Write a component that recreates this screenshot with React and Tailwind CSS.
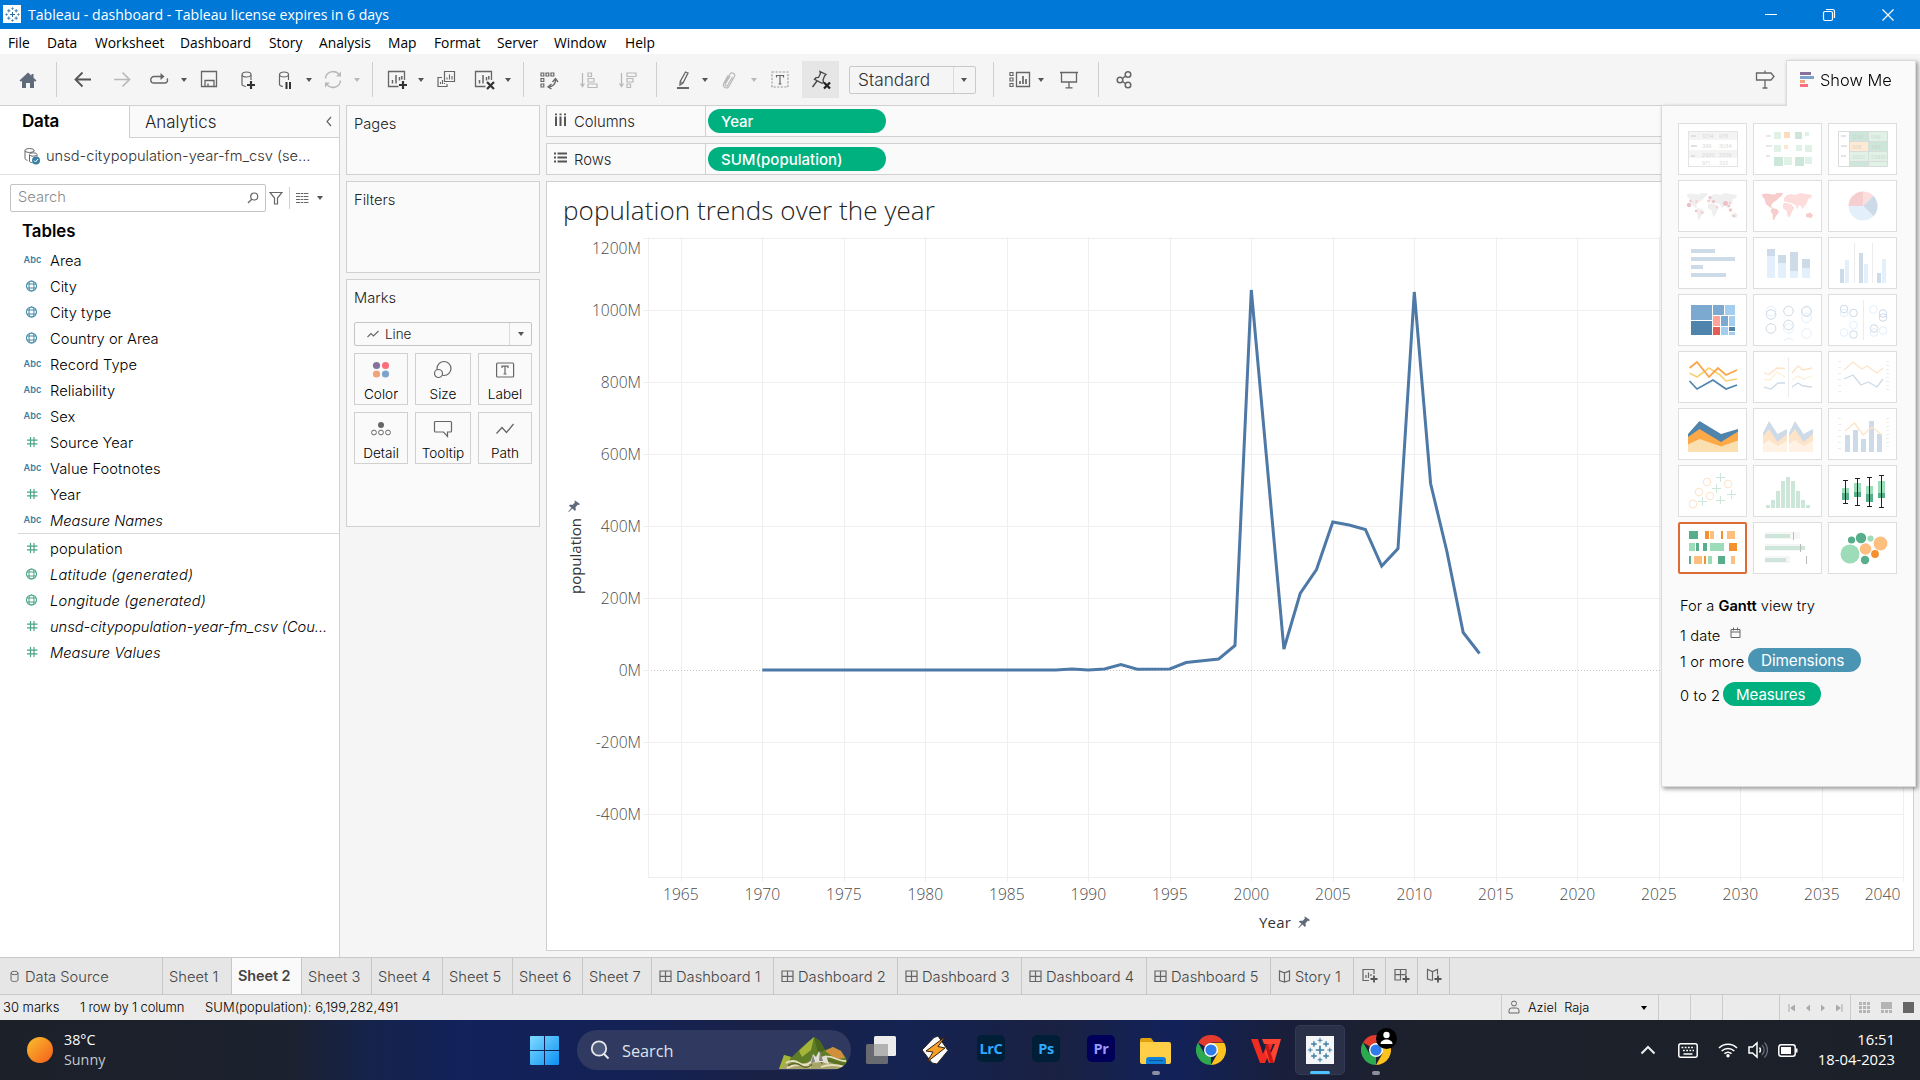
import React from "react";

const UI = "font-['Inter','Liberation_Sans',sans-serif]";
const SYS = "font-['Open_Sans','Noto_Sans',sans-serif]";

/* ---------- shared glyphs ---------- */

function Ic({ w = 20, h = 20, className = "", children }) {
  return (
    <svg width={w} height={h} viewBox={`0 0 ${w} ${h}`} fill="none" className={`shrink-0 ${className}`}>
      {children}
    </svg>
  );
}

const Caret = ({ className = "", c = "#555" }) => (
  <Ic w={8} h={6} className={className}>
    <path d="M1 1h6L4 5z" fill={c} />
  </Ic>
);

const Sep = ({ className }) => <div className={`h-[35px] w-px shrink-0 bg-[#cfcfcf] ${className}`} />;

const TableauMark = ({ size, c = "#2f6f9f" }) => (
  <svg width={size} height={size} viewBox="0 0 30 30" stroke={c} fill="none">
    <path d="M15 10.5v9M10.5 15h9" strokeWidth="1.8" />
    <path d="M8.5 5.5v6M5.5 8.5h6M21.5 5.5v6M18.5 8.5h6M8.5 18.5v6M5.5 21.5h6M21.5 18.5v6M18.5 21.5h6" strokeWidth="1.5" />
    <path d="M15 2v5M12.5 4.5h5M15 23v5M12.5 25.5h5M4.5 12.5v5M2 15h5M25.5 12.5v5M23 15h5" strokeWidth="1.1" />
  </svg>
);

const Pin = ({ c = "#5f6b7b" }) => (
  <path d="M7 0.5l5 3.5-1 1-1.2-.2-2.3 2.5.3 2.7-1 .9-2.3-2.4L.8 12l-.5-.4L3.5 7.8.9 5.7l.9-1 3 .1L7 2.2 6.3 1z" fill={c} />
);

/* ---------- title + menu ---------- */

function TitleBar() {
  return (
    <div className={`flex h-[29px] items-center bg-[#0078d7] text-white ${SYS}`}>
      <div className="-mt-px ml-[3px] flex h-[18px] w-[18px] items-center justify-center bg-white">
        <TableauMark size={17} c="#2a6aa0" />
      </div>
      <span className="ml-[7px] text-[14.1px]">Tableau - dashboard - Tableau license expires in 6 days</span>
      <div className="ml-auto flex items-center">
        <Ic w={14} h={14}><path d="M1 6.5h12" stroke="#fff" /></Ic>
        <Ic w={14} h={14} className="ml-[44px]">
          <rect x="1.5" y="3.5" width="9" height="9" rx="1.5" stroke="#fff" strokeWidth="1.2" />
          <path d="M4 1.5h6.5a2 2 0 0 1 2 2V10" stroke="#fff" strokeWidth="1.2" />
        </Ic>
        <Ic w={14} h={14} className="ml-[45px] mr-[25px]"><path d="M1.5 1.5l11 11M12.5 1.5l-11 11" stroke="#fff" strokeWidth="1.2" /></Ic>
      </div>
    </div>
  );
}

const MENU = [
  ["File", "w-[39px]"], ["Data", "w-[48px]"], ["Worksheet", "w-[85px]"], ["Dashboard", "w-[89px]"],
  ["Story", "w-[50px]"], ["Analysis", "w-[69px]"], ["Map", "w-[46px]"], ["Format", "w-[63px]"],
  ["Server", "w-[57px]"], ["Window", "w-[71px]"], ["Help", "w-[40px]"],
];

function MenuBar() {
  return (
    <div className={`flex h-[25px] items-center bg-white pl-[8px] text-[13.8px] text-black ${SYS}`}>
      {MENU.map(([m, w]) => <span key={m} className={`shrink-0 pt-[3px] ${w}`}>{m}</span>)}
    </div>
  );
}

/* ---------- toolbar ---------- */

const G = "#666";
const L = "#b9b9b9";

function Toolbar() {
  return (
    <div className="flex h-[51px] items-center bg-[#f5f5f5]">
      <Ic className="ml-[18px]"><path d="M10 2.5L1.5 10.5l1.4 1.2L4 10.8V18h4v-5h4v5h4v-7.2l1.1.9 1.4-1.2-3-2.8V4h-2v1.8z" fill="#5f6b7b" /></Ic>
      <Sep className="ml-[18px]" />
      <Ic className="ml-4"><path d="M18 9.5H3M9.5 2.5L2.5 9.5l7 7" stroke="#555" strokeWidth="1.8" /></Ic>
      <Ic className="ml-[19px]"><path d="M2 9.5h15M10.5 2.5l7 7-7 7" stroke={L} strokeWidth="1.7" /></Ic>
      <Ic className="ml-[17px]">
        <path d="M13 6.5H5a3.2 3.2 0 0 0 0 6.5h11a2.8 2.8 0 0 0 2-4.5" stroke={G} strokeWidth="1.4" />
        <path d="M11.5 3L15.5 6.5l-4 3.5z" fill={G} />
      </Ic>
      <Caret className="ml-[11px]" />
      <Ic className="ml-[11px]">
        <path d="M2.5 1.5h15v15h-15z" stroke={G} strokeWidth="1.3" /><path d="M6 16.5v-6h9v6M9 16.5v-3" stroke={G} strokeWidth="1.3" />
      </Ic>
      <Ic className="ml-[19px]">
        <path d="M4 5v9.5c0 1 1.5 1.5 4 2M13 5v5" stroke={G} strokeWidth="1.2" /><ellipse cx="8.5" cy="4.5" rx="4.5" ry="2.5" stroke={G} strokeWidth="1.2" />
        <path d="M13 11v8M9 15h8" stroke="#333" strokeWidth="2.2" />
      </Ic>
      <Ic className="ml-[17px]">
        <path d="M4.5 5v9.5c0 1 1 1.5 3.5 2M13.5 5v5" stroke={G} strokeWidth="1.2" /><ellipse cx="9" cy="4.5" rx="4.5" ry="2.5" stroke={G} strokeWidth="1.2" />
        <path d="M11.5 12v7M15 12v7" stroke="#333" strokeWidth="2" />
      </Ic>
      <Caret className="ml-[10px]" />
      <Ic className="ml-[10px]">
        <path d="M2.5 8.5a7.5 7.5 0 0 1 14-3M17.5 10.5a7.5 7.5 0 0 1-14 3" stroke={L} strokeWidth="1.5" />
        <path d="M18 1.5v5h-5zM2 17.5v-5h5z" fill={L} />
      </Ic>
      <Caret className="ml-[10px]" c={L} />
      <Sep className="ml-[11px]" />
      <Ic w={22} className="ml-[14px]">
        <path d="M17.5 10V1.5h-16v15h10" stroke={G} strokeWidth="1.3" /><path d="M5.5 13.5V10M9 13.5V5M12.5 10.5V7M14.8 9.5V6" stroke={G} strokeWidth="1.5" />
        <path d="M16 11v8M12 15h8" stroke="#333" strokeWidth="2.2" />
      </Ic>
      <Caret className="ml-2" />
      <Ic className="ml-[11px]">
        <path d="M8.5 1.5h10v10h-10z" stroke={G} strokeWidth="1.2" /><path d="M6 7.5H2v9h9V14" stroke={G} strokeWidth="1.2" />
        <path d="M11 9.5v-2M13.5 9.5v-5M16 9.5V6M4.5 14v-2M6.5 14v-4M8.5 14v-1" stroke={G} strokeWidth="1.1" />
      </Ic>
      <Ic w={22} className="ml-[18px]">
        <path d="M17.5 10V1.5h-16v15h10" stroke={G} strokeWidth="1.3" /><path d="M5.5 13.5V10M9 13.5V5M12.5 10.5V7M14.8 9.5V6" stroke={G} strokeWidth="1.5" />
        <path d="M13 12l7 7M20 12l-7 7" stroke="#333" strokeWidth="2.2" />
      </Ic>
      <Caret className="ml-2" />
      <Sep className="ml-[11px]" />
      <Ic className="ml-[15px]">
        <path d="M2 3h2.8v3H2zM7 3h2.8v3H7zM12 3h2.8v3H12zM2 8.5h2.8v3H2zM2 14h2.8v3H2z" stroke={G} strokeWidth="1.2" />
        <path d="M16.5 10c0 4-2 6-6 7M13.5 12l3-3.5 2.5 3.5M12.5 14l-3.5 3 3.5 2" stroke={G} strokeWidth="1.3" />
      </Ic>
      <Ic className="ml-5">
        <path d="M3.5 3v13M1.5 13.5l2 3 2-3" stroke={L} strokeWidth="1.3" /><path d="M9 3h3.5v3.5H9zM9 8.5h6V12H9zM9 14h9v3.5H9z" stroke={L} strokeWidth="1.2" />
      </Ic>
      <Ic className="ml-[19px]">
        <path d="M3.5 3v13M1.5 13.5l2 3 2-3" stroke={L} strokeWidth="1.3" /><path d="M9 3h9v3.5H9zM9 8.5h6V12H9zM9 14h3.5v3.5H9z" stroke={L} strokeWidth="1.2" />
      </Ic>
      <Sep className="ml-[18px]" />
      <Ic className="ml-4">
        <path d="M12.5 2l2.5 1-5 10-3 2 .2-3.5z" stroke={G} strokeWidth="1.3" /><path d="M7 11.5l3 1.5" stroke={G} /><path d="M4 18h12" stroke={G} strokeWidth="2" />
      </Ic>
      <Caret className="ml-2" />
      <Ic className="ml-[10px]">
        <path d="M6 13l5-9a2.6 2.6 0 0 1 4.5 2.5l-6 10.5a3 3 0 0 1-5-3L9 5.5M13.5 7l-5 8.5a1.4 1.4 0 0 1-2.4-1.2L11 6" stroke={L} strokeWidth="1.2" />
      </Ic>
      <Caret className="ml-[11px]" c={L} />
      <Ic className="ml-3">
        <rect x="2" y="2" width="16" height="15" stroke="#999" strokeWidth="1.1" strokeDasharray="2.2 1.4" />
        <path d="M6.5 7.5V5.5h7v2M10 5.5v8.5M8.5 14h3" stroke={G} strokeWidth="1.2" />
      </Ic>
      <div className="ml-3 flex h-[37px] w-[37px] items-center justify-center bg-[#e6e6e6]">
        <Ic w={22} h={22}>
          <path d="M10 2.5l6 3-1.5 1.5-1.5 4 .5 2.5-1.5.8-7.5-4 1.5-1.6L8.5 8.5 10.5 4.5zM7 12l-4.5 6" stroke="#444" strokeWidth="1.3" />
          <path d="M14 13.5l6 6M20 13.5l-6 6" stroke="#222" strokeWidth="2.3" />
        </Ic>
      </div>
      <div className={`ml-[10px] flex h-7 w-[127px] items-center rounded-[2px] border border-[#c9c9c9] bg-[#f5f5f5] ${UI}`}>
        <span className="grow pl-[8px] pt-px text-[17.3px] font-light leading-none text-[#333]">Standard</span>
        <div className="h-full w-px bg-[#dcdcdc]" />
        <Caret className="ml-[6px] mr-[7px]" />
      </div>
      <Sep className="ml-[17px]" />
      <Ic w={22} className="ml-[15px]">
        <path d="M1 2.5h3v3H1zM1 8h3v3H1zM1 13.5h3v3H1z" stroke={G} strokeWidth="1.2" /><path d="M7.5 2.5h13v14h-13z" stroke={G} strokeWidth="1.3" />
        <path d="M11 14v-3M14 14v-8M17 14v-5" stroke={G} strokeWidth="1.7" />
      </Ic>
      <Caret className="ml-[6px]" />
      <Ic className="ml-[14px]">
        <path d="M1 2.5h18M2.5 2.5v9.5h15V2.5M10 12V17.5M6.5 17.8h7" stroke={G} strokeWidth="1.3" />
      </Ic>
      <Sep className="ml-[19px]" />
      <Ic className="ml-[15px]">
        <circle cx="6" cy="10" r="2.8" stroke={G} strokeWidth="1.5" /><circle cx="14" cy="4.5" r="2.8" stroke={G} strokeWidth="1.5" /><circle cx="14" cy="15" r="2.8" stroke={G} strokeWidth="1.5" />
        <path d="M8.5 8.5l3-2.5M8.5 11.5l3 2" stroke={G} strokeWidth="1.5" />
      </Ic>
      <Ic className="ml-auto mr-[145px]">
        <path d="M1.500 3H16l3 3.5-3 3.5H1.500zM10 .5v2.500M10 10v8M7.500 18h5" stroke={G} strokeWidth="1.3" />
      </Ic>
    </div>
  );
}

/* ---------- data pane ---------- */

const BLUE = "#4489a8";
const GREEN = "#4aa583";

function FieldIcon({ type, c }) {
  if (type === "abc")
    return <span className="w-[17px] text-[9.2px] font-semibold leading-none text-[#3f7f9f]">Abc</span>;
  if (type === "geo")
    return (
      <Ic w={17} h={12} className="-mt-px">
        <circle cx="7.5" cy="6" r="5" stroke={c} strokeWidth="1.1" /><ellipse cx="7.5" cy="6" rx="2.5" ry="5" stroke={c} /><path d="M3 4h9M3 8h9" stroke={c} />
      </Ic>
    );
  return <Ic w={17} h={12} className="-mt-px"><path d="M6.5 1v10M10 1v10M3 4.2h10.5M3 7.8h10.5" stroke={c} strokeWidth="1.2" /></Ic>;
}

const DIMS = [
  ["abc", "Area"], ["geo", "City"], ["geo", "City type"], ["geo", "Country or Area"], ["abc", "Record Type", "tracking-[0.05px]"],
  ["abc", "Reliability", "tracking-[0.05px]"], ["abc", "Sex"], ["num", "Source Year"], ["abc", "Value Footnotes", "tracking-[0.08px]"], ["num", "Year"],
  ["abc", "Measure Names", "italic"],
];
const MEAS = [
  ["num", "population", "tracking-[0.1px]"], ["geo", "Latitude (generated)", "italic tracking-[0.22px]"],
  ["geo", "Longitude (generated)", "italic tracking-[0.2px]"],
  ["num", "unsd-citypopulation-year-fm_csv (Cou...", "italic tracking-[-0.04px]"], ["num", "Measure Values", "italic tracking-[0.03px]"],
];

function Field({ type, name, look = "", c }) {
  return (
    <div className="-mt-px mb-px flex h-[26px] items-center pl-[23.5px]">
      <FieldIcon type={type} c={type === "num" ? GREEN : c} />
      <span className={`ml-[9.5px] whitespace-nowrap pt-[1.5px] text-[14.7px] font-light text-black ${look}`}>{name}</span>
    </div>
  );
}

function DataPane() {
  return (
    <div className={`flex w-[340px] shrink-0 flex-col border-r border-t border-[#d0d0d0] bg-white ${UI}`}>
      <div className="flex h-8 text-[17px]">
        <div className="w-[129px] pl-[22px] pt-[3px] font-semibold tracking-[-0.2px] text-black">Data</div>
        <div className="flex grow items-center border-b border-l border-[#d0d0d0] bg-[#fafafa] pl-[15px]">
          <span className="pt-[2px] text-[16.9px] font-light text-[#222]">Analytics</span>
          <Ic w={8} h={14} className="ml-auto mr-[6px]"><path d="M6 2L2 6.5l4 4.5" stroke={G} strokeWidth="1.2" /></Ic>
        </div>
      </div>
      <div className="flex h-[37px] items-center border-b border-[#e0e0e0] pl-[23px]">
        <Ic w={18} h={18}>
          <path d="M2 3.5v8c0 1 1 1.5 2.5 1.8M11 3.5v1M6.5 8v6c0 1 1.2 1.5 3 1.8M14 8v1.5" stroke={G} />
          <ellipse cx="6.5" cy="3.5" rx="4.5" ry="2" stroke={G} /><ellipse cx="10.2" cy="7.5" rx="3.8" ry="1.7" stroke={G} />
          <circle cx="13" cy="13.5" r="4" fill="#3a7fa5" /><path d="M11 13.5l1.5 1.5 2.5-3" stroke="#fff" />
        </Ic>
        <span className="ml-[5px] pt-px text-[14.65px] font-light text-[#333]">unsd-citypopulation-year-fm_csv (se...</span>
      </div>
      <div className="flex h-12 items-center pb-[3px] pl-[10px]">
        <div className="flex h-[28px] w-[256px] items-center rounded-[2px] border border-[#c4c4c4] pl-[7px] pr-[6px]">
          <span className="grow text-[14.7px] font-light text-[#8a8a8a]">Search</span>
          <Ic w={12} h={12}><circle cx="7.2" cy="4.5" r="3.5" stroke={G} strokeWidth="1.2" /><path d="M4.7 7.2L1 11" stroke={G} strokeWidth="1.3" /></Ic>
        </div>
        <Ic w={14} h={14} className="ml-[3px]"><path d="M1 1.5h12L8.5 7v6h-3V7z" stroke={G} strokeWidth="1.2" /></Ic>
        <div className="ml-[6px] h-[22px] w-px bg-[#d0d0d0]" />
        <Ic w={13} h={12} className="ml-[6px]">
          <path d="M0 1.5h13M0 4.5h13M0 7.5h13M0 10.5h13" stroke={G} strokeWidth="1.2" strokeDasharray="4 .6 2.8 .6" />
        </Ic>
        <Caret className="ml-[7px]" />
      </div>
      <div className="h-[25px] pl-[22px] text-[16.8px] font-semibold leading-[16px] text-black">Tables</div>
      {DIMS.map(([t, n, i]) => <Field key={n} type={t} name={n} look={i} c={BLUE} />)}
      <div className="-mt-px mb-px ml-[18px] h-[2px] border-t border-[#d8d8d8]" />
      {MEAS.map(([t, n, i]) => <Field key={n} type={t} name={n} look={i} c={GREEN} />)}
    </div>
  );
}

/* ---------- cards ---------- */

function MarkButton({ label, children, w }) {
  return (
    <div className={`flex h-[52px] flex-col items-center justify-end border border-[#d0d0d0] bg-[#fafafa] pb-[2px] ${w}`}>
      <Ic w={22} h={20}>{children}</Ic>
      <span className="mt-[6px] text-[13.6px] font-light leading-[16px] text-black">{label}</span>
    </div>
  );
}

function Cards() {
  const box = "border border-[#d0d0d0] bg-[#fafafa] pl-[7px] text-[14.7px] font-light text-[#222]";
  return (
    <div className={`ml-[6px] flex w-[194px] shrink-0 flex-col gap-[6px] ${UI}`}>
      <div className={`h-[70px] pt-[7px] ${box}`}>Pages</div>
      <div className={`h-[92px] pt-[7px] ${box}`}>Filters</div>
      <div className={`h-[248px] pt-[7px] ${box}`}>
        Marks
        <div className="mt-[13px] flex h-6 w-[178px] items-center rounded-[2px] border border-[#c4c4c4] text-[13.4px]">
          <Ic w={12} h={8} className="ml-3"><path d="M.5 7L4 3.5 6.5 6 11.5 1" stroke={G} strokeWidth="1.1" /></Ic>
          <span className="ml-[6px] grow">Line</span>
          <div className="h-full w-px bg-[#dcdcdc]" />
          <Caret className="ml-[7px] mr-[6px]" />
        </div>
        <div className="mt-[7px] flex w-[178px] flex-wrap justify-between gap-y-[7px]">
          <MarkButton label="Color" w="w-[54px]">
            <circle cx="6.5" cy="5.5" r="3.6" fill="#87709b" /><circle cx="15.5" cy="5.5" r="3.6" fill="#fb6e7d" />
            <circle cx="6.5" cy="14" r="3.6" fill="#efa47c" /><circle cx="15.5" cy="14" r="3.6" fill="#7da3cc" />
          </MarkButton>
          <MarkButton label="Size" w="w-[56px]">
            <circle cx="12" cy="8.5" r="7" stroke={G} strokeWidth="1.2" /><circle cx="6.5" cy="13.5" r="4" stroke={G} strokeWidth="1.2" fill="#fafafa" />
          </MarkButton>
          <MarkButton label="Label" w="w-[54px]">
            <rect x="2.6" y="3" width="17" height="14" rx="1" stroke={G} strokeWidth="1.2" /><path d="M8 8V6.2h6V8M11 6.2V14M9.5 14h3" stroke={G} strokeWidth="1.2" />
          </MarkButton>
          <MarkButton label="Detail" w="w-[54px]">
            <circle cx="11" cy="6" r="3" fill={G} /><circle cx="4" cy="13.5" r="2.4" stroke={G} /><circle cx="11" cy="13.5" r="2.4" stroke={G} /><circle cx="18" cy="13.5" r="2.4" stroke={G} />
          </MarkButton>
          <MarkButton label="Tooltip" w="w-[56px]">
            <path d="M3.5 2.5h15a1 1 0 0 1 1 1v8.5a1 1 0 0 1-1 1H15.5v4.5L11.5 13h-8a1 1 0 0 1-1-1V3.5a1 1 0 0 1 1-1z" stroke={G} strokeWidth="1.2" />
          </MarkButton>
          <MarkButton label="Path" w="w-[54px]">
            <path d="M2.5 14.5L8 8.5l4.5 5L19.5 5" stroke={G} strokeWidth="1.3" />
          </MarkButton>
        </div>
      </div>
    </div>
  );
}

/* ---------- shelves + chart ---------- */

function Shelf({ label, pill, children }) {
  return (
    <div className={`flex h-8 shrink-0 items-center border border-r-0 border-[#d0d0d0] bg-[#fafafa] ${UI}`}>
      <div className="flex h-full w-[159px] items-center border-r border-[#d0d0d0] pl-[7px]">
        <Ic w={13} h={13} className="-mt-[3px]">{children}</Ic>
        <span className="ml-[7px] pt-[2px] text-[14.8px] font-light text-[#222]">{label}</span>
      </div>
      <div className="ml-[2px] flex h-6 w-[178px] items-center rounded-full bg-[#00b180] pl-[13px] pt-[2px] text-[15px] font-medium text-white">{pill}</div>
    </div>
  );
}

const POINTS = [
  [1970, 670], [1986, 670], [1988, 670], [1989, 669], [1990, 670], [1991, 669], [1992, 664.5], [1993, 669.2], [1995, 669],
  [1996, 662.5], [1998, 659], [1999, 645.5], [2000, 290], [2002, 649], [2003, 593.5], [2004, 569.5], [2005, 522],
  [2006, 525], [2007, 529.5], [2008, 566], [2009, 548.5], [2010, 292], [2011, 483.5], [2012, 551.5], [2013, 632.5], [2014, 653.5],
];
const px = (year) => 680.8 + (year - 1965) * 16.3;
const YEARS = Array.from({ length: 16 }, (_, i) => 1965 + i * 5);
const VALUES = ["1200M", "1000M", "800M", "600M", "400M", "200M", "0M", "-200M", "-400M"];

function Chart() {
  return (
    <div className="flex grow flex-col border border-[#d0d0d0] bg-white">
      <div className={`h-[55px] pl-4 pt-[11px] text-[26px] font-light leading-[34px] tracking-[0.08px] text-[#222] ${SYS}`}>population trends over the year</div>
      <svg width="1366" height="713" viewBox="547 237 1366 713" fill="none" className={SYS}>
        <g shapeRendering="crispEdges" stroke="#efefef">
          <path d="M648.5 237v640M648 877.5h1256" />
          {YEARS.map((y) => <path key={y} d={`M${Math.floor(px(y) + 0.6) + 0.5} 237v645`} />)}
          {VALUES.map((v, i) => i !== 6 && <path key={v} d={`M643 ${238.5 + i * 72}h1261`} />)}
          <path d="M643 670.5h5" />
          <path d="M651 670.5h1253" stroke="#c4c4c4" strokeDasharray="1 2" />
        </g>
        <g fill="#4a4a4a" fontSize="15.6" fontWeight="300">
          {VALUES.map((v, i) => <text key={v} x="641" y={i === 0 ? 254 : 244 + i * 72} textAnchor="end">{v}</text>)}
          {YEARS.map((y) => <text key={y} x={y === 2040 ? 1882.5 : px(y)} y="900" textAnchor="middle">{y}</text>)}
        </g>
        <polyline points={POINTS.map(([y, v]) => `${px(y)},${v}`).join(" ")} stroke="#4e79a7" strokeWidth="3" strokeLinejoin="miter" strokeMiterlimit="2" />
        <g fill="#333" fontSize="15" fontWeight="500">
          <text x="1259" y="927.5" textLength="32">Year</text>
          <text transform="translate(580.5 594) rotate(-90)" textLength="76">population</text>
        </g>
        <g transform="translate(568 500)"><Pin /></g>
        <g transform="translate(1298 916)"><Pin /></g>
      </svg>
    </div>
  );
}

/* ---------- Show Me ---------- */

const B1 = "#cddae8", B2 = "#e3f0fb", O1 = "#fde3c8", O2 = "#fef0d8", E1 = "#cce6da", E2 = "#e0f2e6";
const MAP = "M9 14l5-.5 6 1 4-.5 3 3-3 3-3 2-2 2-1 2 2 2-3-.5-4-3.5-1.5-5-2-2zM22 13h8l-2 4-2.5-1zM19 28l5 1 2 3-3 4-2 4h-1l-.5-6-2-3zM30 24l3-1 5 1.5 3 3.5-2 3-2 5-2 1-1-6-4-3zM53 34l4-1.5 3 2.5-1.5 3-5.5-1z";
const ASIA = "M31 18l3-3 4-1 4 1 5-2 6 1 6 1-1 3-3 1-1 4-3 4-1.5 2-1.5-3-2-1-1.5 4-2-4-4.5-2-4-1-3-.5z";
const R = ({ x, y, w, h, c }) => <rect x={x} y={y} width={w} height={h} fill={c} />;
const Rs = ({ d }) => d.map(([x, y, w, h, c], i) => <R key={i} x={x} y={y} w={w} h={h} c={c} />);
const Cs = ({ d, fill }) => d.map(([x, y, r, c], i) => <circle key={i} cx={x} cy={y} r={r} fill={fill ? c : "none"} stroke={fill ? "none" : c} strokeWidth="1" />);
const Ln = ({ p, c, w = 1.3 }) => <polyline points={p} stroke={c} strokeWidth={w} fill="none" />;
const Tx = ({ d }) => (
  <g fontSize="5.2" fontWeight="300" fill="#cccccc">{d.map(([x, y, t]) => <text key={t} x={x} y={y}>{t}</text>)}</g>
);
const Ticks = () => (
  <path d="M10 10.5h3M10 16.5h3M10 22.5h3M10 28.5h3M10 34.5h3M10 40.5h3M58 10.5h3M58 14.5h3M58 18.5h3M58 22.5h3M58 26.5h3M58 30.5h3M58 34.5h3M58 38.5h3" stroke="#ececec" />
);

const THUMBS = [
  <><Rs d={[[10, 8, 49, 9, "#f4f4f4"], [10, 27, 49, 8, "#f4f4f4"], [13, 12, 5, 2, "#e0e0e0"], [13, 22, 6, 2, "#e0e0e0"], [13, 32, 4, 2, "#e0e0e0"]]} /><rect x="10.5" y="8.5" width="49" height="35" stroke="#e4e4e4" /><Tx d={[[24, 15, "1234"], [41, 15, "678"], [24, 24.5, "368"], [41, 24.5, "3034"], [24, 33.5, "2620"], [41, 33.5, "2559"], [24, 41.5, "971"], [41, 41.5, "322"]]} /></>,
  <Rs d={[[13, 12, 5, 2, "#e8e8e8"], [13, 22, 6, 2, "#e8e8e8"], [13, 32, 4, 2, "#e8e8e8"], [21, 9, 7, 7, E2], [31, 9, 6, 6, "#fbdcc0"], [42, 9, 7, 7, E1], [52, 9, 4, 4, E2], [21, 22, 7, 7, E2], [31, 22, 4, 4, "#fee6cf"], [43, 22, 6, 6, E2], [52, 22, 7, 7, E2], [21, 34, 9, 9, E1], [31, 34, 8, 8, E2], [42, 34, 9, 9, E1], [52, 34, 7, 7, E2]]} />,
  <><Rs d={[[21, 8, 19, 10, E1], [40, 8, 20, 10, E2], [21, 18, 19, 10, "#fee9d2"], [40, 18, 20, 10, E1], [21, 28, 19, 10, E2], [40, 28, 20, 10, E2], [21, 38, 19, 5, E1], [40, 38, 20, 5, E2], [13, 12, 5, 2, "#e4e4e4"], [13, 22, 6, 2, "#e4e4e4"], [13, 32, 5, 2, "#e4e4e4"]]} /><path d="M10.5 8.5h49v35h-49zM21.5 8v35M40.5 8v35M21 18.5h38M21 28.5h38M21 38.5h38" stroke="#d8dcda" /><Tx d={[[24, 15.5, "1234"], [43, 15.5, "546"], [24, 25.5, "368"], [43, 25.5, "343"], [24, 35.5, "2620"], [43, 35.5, "53890"]]} /></>,
  <><path d={MAP + ASIA} fill="#efefef" /><Cs fill d={[[11, 25, 2.2, "#ecc0c6"], [12.5, 21, 1.2, "#ecc0c6"], [18.5, 21.5, 1.5, "#fbd5d5"], [32, 17.5, 1.5, "#ecc0c6"], [30.5, 21, 1.5, "#f8cfcf"], [35.5, 21.5, 1.6, "#ecc0c6"], [47.5, 23.5, 2.5, "#ecc0c6"], [52, 23, 1.3, "#f8cfcf"], [51, 26, 1.2, "#ecc0c6"], [52.5, 30, 1.8, "#f5c5c5"], [39, 27, 1.2, "#f8cfcf"], [18, 31, 1.2, "#ecc0c6"], [24, 32.5, 1.8, "#fbd5d5"], [56, 36, 1.2, "#ecc0c6"]]} /></>,
  <><path d={MAP} fill="#f7cdcb" /><path d={ASIA + "M30 24l3-1 5 1.5 3 3.5-2 3-2 5-2 1-1-6-4-3z"} fill="#fddcdc" /></>,
  <><path d="M35 26V11.5A14.5 14.5 0 0 1 45.3 15.7z" fill="#fddede" /><path d="M35 26L45.3 15.7A14.5 14.5 0 0 1 45.3 36.3z" fill={B1} /><path d="M35 26L45.3 36.3A14.5 14.5 0 0 1 20.5 26z" fill={B2} /><path d="M35 26H20.5A14.5 14.5 0 0 1 35 11.5z" fill="#f5cfcf" /></>,
  <Rs d={[[13, 12, 24, 4, B1], [13, 20, 44, 4, B1], [13, 28, 12, 4, B1], [13, 36, 35, 4, B1]]} />,
  <Rs d={[[14, 12, 8, 7, B1], [14, 19, 8, 22, B2], [25, 18, 8, 8, B1], [25, 26, 8, 15, B2], [37, 15, 8, 19, B1], [37, 34, 8, 7, B2], [49, 22, 8, 9, B1], [49, 31, 8, 10, B2]]} />,
  <Rs d={[[26, 6, 1, 40, "#ececec"], [44, 6, 1, 40, "#ececec"], [12, 32, 4, 14, B1], [17, 23, 4, 23, B2], [31, 16, 4, 30, B1], [36, 27, 4, 19, B2], [49, 36, 4, 10, B1], [54, 22, 4, 24, B2]]} />,
  <Rs d={[[13, 11, 21, 15, "#7ba9cf"], [13, 27, 21, 14, "#4f84ad"], [35, 11, 11, 10, "#7ba9cf"], [47, 11, 10, 10, "#a3cef0"], [35, 22, 7, 10, "#ffa39b"], [43, 22, 7, 10, "#7ba9cf"], [51, 22, 6, 10, "#a3cef0"], [35, 33, 7, 8, "#e15f55"], [43, 33, 7, 8, "#a3cef0"], [51, 33, 6, 4, "#4f84ad"], [51, 38, 6, 3, "#a3cef0"]]} />,
  <><Cs d={[[18, 17, 4.8, B2], [18, 20.5, 4.8, B1], [18, 34.5, 4.8, B1], [35.5, 17, 4.8, B1], [35.5, 31, 4.8, B1], [35.5, 34.5, 4.8, B2], [53.5, 17, 4.8, B2], [53.5, 17.5, 4.8, B1], [53.5, 24, 4.8, B2], [53.5, 39.5, 4.8, B2]]} /><path d="M31 47a5 5 0 0 1 9 0" stroke={B2} /></>,
  <><R x={35} y={6} w={1} h={40} c="#ececec" /><Cs d={[[16, 15, 3.8, B1], [16, 19, 3.8, B2], [25.5, 19, 3.8, B1], [25.5, 31, 3.8, B2], [16, 38.5, 3.8, B2], [25.5, 40.5, 3.8, B1], [45.5, 15.5, 3.8, B2], [55, 19.5, 3.8, B1], [55, 23.5, 3.8, B1], [46, 34.5, 3.8, B1], [46, 38.5, 3.8, B2], [55, 36.5, 3.8, B2]]} /></>,
  <><Ln p="11.5,22 19,26 31,17 42,24 48,30 59,28" c="#f8d271" w={1.6} /><Ln p="11.5,17 19,11 31,26 40,17 48,24 59,19" c="#f9a64a" w={1.8} /><Ln p="11.5,30 19,38 35,29 48,38 59,34" c="#4f84ad" w={1.7} /></>,
  <><R x={35} y={6} w={1} h={40} c="#ececec" /><Ln p="11,22 16,23.5 24,17 32,17.5" c={O1} /><Ln p="11,28.5 17,29 24,21 32,26" c={O2} /><Ln p="11,36 18,38 25,32 32,32" c={B1} /><Ln p="39,22 45,15 50,19 59,17" c={O1} /><Ln p="39,29 45,25 50,28 59,25" c={O2} /><Ln p="39,36 45,32 50,35 59,36" c={B1} /></>,
  <><Ticks /><Ln p="16,19 25,11 34,18 39,15 49,22 55,17" c={O1} /><Ln p="16,28 25,24 33,34 40,31 49,36 55,28" c={B1} /></>,
  <><path d="M10 26l11.5-13L43 26l17-5v22.5H10z" fill="#4f84ad" /><path d="M10 29l11.5-8L43 34l17-10.5v20H10z" fill="#fda948" /><path d="M10 36.5L21.5 31 43 38.5l17-6v11.5H10z" fill="#fae0b0" /></>,
  <><path d="M10 25l6-12 8.5 13 9.5-5v22.5H10zM36 25l6-12 8.5 13 9.5-5v22.5H36z" fill={B1} /><path d="M10 28l6-7 8.5 13 9.5-8v18H10zM36 28l6-7 8.5 13 9.5-8v18H36z" fill={O1} /><path d="M10 36l6-4 8.5 6 9.5-5v11H10zM36 36l6-4 8.5 6 9.5-5v11H36z" fill="#fff2e4" /></>,
  <><Ticks /><Rs d={[[17, 27, 5, 17, B1], [25, 22, 5, 22, B1], [33, 31, 5, 13, B1], [41, 13, 5, 31, B1], [49, 26, 5, 18, B1]]} /><Ln p="17,23 26.5,15 35,27 44,19 54,27" c={O1} /></>,
  <><Cs d={[[29, 17, 3.8, O1], [50, 19, 3.8, O1], [21, 27, 3.8, O1], [32, 31, 3.8, O1], [15, 39, 3.8, O1]]} /><path d="M42.5 8v9M38 12.5h9M38.5 19v9M34 23.5h9M24.5 32v9M20 36.5h9M42.5 31v8M38 35.5h9M53.5 25v9M49 29.5h9" stroke={E1} /></>,
  <Rs d={[40, 35, 26, 16, 12, 16, 26, 35, 40].map((t, i) => [13 + i * 5, t, 4, 43 - t, E1])} />,
  <><Rs d={[[14, 23, 7, 5, "#9ddcb8"], [14, 28, 7, 7, "#57ae8a"], [26, 18, 7, 9, "#9ddcb8"], [26, 27, 7, 5, "#57ae8a"], [38, 21, 7, 8, "#9ddcb8"], [38, 29, 7, 8, "#57ae8a"], [50, 16, 7, 12, "#9ddcb8"], [50, 28, 7, 5, "#57ae8a"]]} /><path d="M17.5 15v23M15 15.5h5M15 38.5h5M29.5 13v27M27 13.5h5M27 40.5h5M41.5 12v29M39 12.5h5M39 41.5h5M53.5 10v32M51 10.5h5M51 42.5h5" stroke="#222" /></>,
  <Rs d={[[11, 9, 9, 8, "#57ae8a"], [27, 9, 4, 8, "#f5902e"], [32, 9, 4, 8, "#fdbf80"], [43, 9, 2, 8, "#f5902e"], [49, 9, 8, 8, "#fdbf80"], [11, 21, 6, 8, "#9ddcb8"], [18, 21, 3, 8, "#57ae8a"], [25, 21, 4, 8, "#57ae8a"], [32, 21, 14, 8, "#9ddcb8"], [51, 21, 8, 8, "#f5902e"], [11, 34, 2, 8, "#57ae8a"], [16, 34, 8, 8, "#fdbf80"], [26, 34, 2, 8, "#f5902e"], [30, 34, 4, 8, "#9ddcb8"], [40, 34, 7, 8, "#57ae8a"], [53, 34, 4, 8, "#fdbf80"]]} />,
  <Rs d={[[12, 10, 35, 7, "#f6f6f6"], [12, 22, 38, 7, "#f6f6f6"], [12, 34, 25, 7, "#f6f6f6"], [12, 12, 25, 4, E1], [12, 24, 40, 4, E1], [12, 36, 21, 4, E1], [40, 10, 1, 8, "#bbb"], [47, 22, 1, 8, "#bbb"], [53, 34, 1, 8, "#bbb"]]} />,
  <Cs fill d={[[22, 32, 9.5, "#9ddcb8"], [23.5, 18, 3.6, "#57ae8a"], [33, 16, 5.2, "#57ae8a"], [42.5, 16.5, 3.1, "#9ddcb8"], [52.5, 21.5, 6.9, "#fdbf80"], [37.5, 27, 5.8, "#fdbf80"], [47, 32, 3.9, "#f5902e"], [37, 38, 4.2, "#57ae8a"]]} />,
];

function ShowMe() {
  return (
    <div className={`absolute right-[4px] top-[60px] flex w-[255px] flex-col drop-shadow-[2px_2px_2px_rgba(0,0,0,0.4)] ${UI}`}>
      <div className="relative z-10 -mb-px flex h-[46px] w-[130px] self-end border border-b-0 border-[#dadada] bg-[#fafafa]">
        <Ic w={15} h={16} className="ml-[13px] mt-[11px]">
          <R x={0} y={0} w={11} h={3} c="#87709b" /><R x={0} y={4} w={14} h={3} c="#7da3cc" /><R x={0} y={8} w={5} h={3} c="#efa47c" /><R x={0} y={12} w={8} h={3} c="#fb6e7d" />
        </Ic>
        <span className="ml-[5px] mt-[9px] whitespace-nowrap text-[16.4px] font-light leading-[20px] text-black">Show Me</span>
      </div>
      <div className="h-[682px] border border-[#dadada] bg-[#fafafa] pl-4 pt-[17px]">
        <div className="grid w-[219px] grid-cols-3 gap-x-[6px] gap-y-[5px]">
          {THUMBS.map((t, i) => (
            <svg key={i} width="69" height="52" viewBox="0 0 69 52" fill="none">
              {i === 21
                ? <rect x="1" y="1" width="67" height="50" fill="#fff" stroke="#dd6b35" strokeWidth="2" rx="1" />
                : <rect x=".5" y=".5" width="68" height="51" fill="#fff" stroke="#dedede" />}
              {t}
            </svg>
          ))}
        </div>
        <div className="pl-[2px] text-[14.7px] font-light text-black">
          <div className="mt-[21px] h-[22px]">For a <b className="font-semibold">Gantt</b> view try</div>
          <div className="mt-[8px] flex h-[22px] tracking-[0.15px]">
            1 date
            <Ic w={11} h={12} className="ml-[9px] mt-[2px]"><path d="M1 2.5h9v8H1zM1 5h9M3.5 .5v3M7.5 .5v3" stroke={G} /></Ic>
          </div>
          <div className="mt-px flex h-6 items-center">
            <span className="w-[68px] whitespace-nowrap pt-[4px] tracking-[0.15px]">1 or more</span>
            <span className="h-6 w-[113px] rounded-full bg-[#4a95b4] pl-[13px] pt-px text-[15.3px] font-normal leading-[24px] tracking-[-0.1px] text-white">Dimensions</span>
          </div>
          <div className="mt-[10px] flex h-6 items-center">
            <span className="w-[43px] whitespace-nowrap pt-[4px] tracking-[0.15px]">0 to 2</span>
            <span className="h-6 w-[98px] rounded-full bg-[#00b180] pl-[13px] pt-px text-[15.1px] font-normal leading-[24px] tracking-[-0.1px] text-white">Measures</span>
          </div>
        </div>
      </div>
    </div>
  );
}

/* ---------- sheet tabs + status ---------- */

const GridIc = () => <Ic w={13} h={13}><path d="M1 1h11v10.5H1zM6.5 1v10.5M1 6.3h11" stroke={G} strokeWidth="1.2" /></Ic>;
const BookIc = () => <Ic w={13} h={13}><path d="M1.5 1v9.5L6.5 12V3zM11.5 1v9.5L6.5 12V3z" stroke={G} strokeWidth="1.2" /></Ic>;
const Plus = () => <path d="M12 7.5v7M8.5 11h7" stroke="#555" strokeWidth="1.8" />;

const TABS = [
  ["Sheet 1", "w-[69px]"], ["Sheet 2", "w-[70px]"], ["Sheet 3", "w-[70px]"], ["Sheet 4", "w-[71px]"], ["Sheet 5", "w-[70px]"],
  ["Sheet 6", "w-[70px]"], ["Sheet 7", "w-[69px]"], ["Dashboard 1", "w-[122px]"], ["Dashboard 2", "w-[124px]"],
  ["Dashboard 3", "w-[124px]"], ["Dashboard 4", "w-[125px]"], ["Dashboard 5", "w-[124px]"], ["Story 1", "w-[83px]"],
];

function SheetTabs() {
  const tab = "flex h-full shrink-0 items-center whitespace-nowrap border-r border-[#c6c6c6]";
  return (
    <div className={`flex h-[38px] items-center border-y border-[#c9c9c9] bg-[#e6e6e6] text-[14.7px] font-light text-[#444] ${UI}`}>
      <div className={`${tab} w-[163px] pl-[10px]`}>
        <Ic w={9} h={13}><path d="M1 3v7c0 2 7 2 7 0V3" stroke={G} /><ellipse cx="4.5" cy="3" rx="3.5" ry="1.7" stroke={G} /></Ic>
        <span className="ml-[6px] pt-[2px]">Data Source</span>
      </div>
      {TABS.map(([n, w]) => {
        if (n === "Sheet 2")
          return <div key={n} className={`${tab} ${w} bg-[#fafafa] pl-[6px] text-[14.4px] font-semibold tracking-[-0.05px]`}>{n}</div>;
        const dash = n.startsWith("Dash"), story = n.startsWith("Story");
        return (
          <div key={n} className={`${tab} ${w} ${dash || story ? "pl-[7px]" : "pl-[6px]"}`}>
            {dash && <GridIc />}{story && <BookIc />}
            <span className={dash || story ? "ml-[4px] pt-[2px]" : "pt-[2px]"}>{n}</span>
          </div>
        );
      })}
      <div className={`${tab} w-[32px] pl-[8px]`}><Ic w={17} h={16}><path d="M12 6V1.5H1v11h6" stroke={G} strokeWidth="1.2" /><path d="M4 10V7M6.5 10V4.5M9 8V6" stroke={G} strokeWidth="1.2" /><Plus /></Ic></div>
      <div className={`${tab} w-[32px] pl-[8px]`}><Ic w={17} h={16}><path d="M12 6.5V1.5H1v10.5h6M6.5 1.5V12M1 6.7h11" stroke={G} strokeWidth="1.2" /><Plus /></Ic></div>
      <div className={`${tab} w-[32px] pl-[8px]`}><Ic w={17} h={16}><path d="M6.5 12.5L1.5 11V1.5l5 2 5-2V6.5M6.5 3.5v9" stroke={G} strokeWidth="1.2" /><Plus /></Ic></div>
    </div>
  );
}

function StatusBar() {
  const cell = "h-full border-l border-[#cacaca]";
  return (
    <div className={`flex h-[25px] items-center bg-[#ebebeb] text-[13px] font-light text-black ${UI}`}>
      <span className="w-[77px] pl-[3px]">30 marks</span>
      <span className="w-[128px] pl-[3px] tracking-[-0.15px]">1 row by 1 column</span>
      <span className="tracking-[0.05px]">SUM(population): 6,199,282,491</span>
      <div className="ml-auto flex h-full">
        <div className={`${cell} flex w-[157px] items-center pl-[6px]`}>
          <Ic w={12} h={14} className="-mt-px"><circle cx="6" cy="3.5" r="2.5" stroke={G} /><path d="M1 13V10.5a2.5 2.5 0 0 1 2.5-2.5h5a2.5 2.5 0 0 1 2.5 2.5V13z" stroke={G} /></Ic>
          <span className="ml-2 whitespace-pre text-[12.8px]">Aziel  Raja</span>
          <Caret className="ml-auto mr-[10px]" c="#000" />
        </div>
        <div className={`${cell} w-[32px]`} /><div className={`${cell} w-[32px]`} /><div className={`${cell} w-[57px]`} />
        <div className={`${cell} flex w-[71px] items-center justify-between pl-[8px] pr-[7px]`}>
          <Ic w={8} h={8}><path d="M1 0v8" stroke="#aaa" /><path d="M7 .5v7L2 4z" fill="#aaa" /></Ic>
          <Ic w={6} h={8}><path d="M5 .5v7L1 4z" fill="#aaa" /></Ic>
          <Ic w={6} h={8}><path d="M1 .5v7L5 4z" fill="#aaa" /></Ic>
          <Ic w={8} h={8}><path d="M7 0v8" stroke="#aaa" /><path d="M1 .5v7L6 4z" fill="#aaa" /></Ic>
        </div>
        <div className={`${cell} flex w-[70px] items-center gap-[11px] pl-[8px]`}>
          <Ic w={11} h={11}><path d="M0 1.5h11M0 5.5h11M0 9.5h11" stroke="#b4b4b4" strokeWidth="3" strokeDasharray="3 1" /></Ic>
          <Ic w={11} h={11}><R x={0} y={0} w={11} h={7} c="#b4b4b4" /><path d="M0 9.5h11" stroke="#b4b4b4" strokeWidth="3" strokeDasharray="3 1" /></Ic>
          <Ic w={11} h={11}><R x={0} y={0} w={11} h={11} c="#666" /></Ic>
        </div>
      </div>
    </div>
  );
}

/* ---------- OS taskbar ---------- */

function Chrome() {
  return (
    <svg width="30" height="30" viewBox="0 0 30 30">
      <path d="M15 15L2 7.5A15 15 0 0 1 28 7.5H15z" fill="#e33b2e" />
      <path d="M15 15v15A15 15 0 0 1 2 7.5L8.5 18.8z" fill="#2da94f" />
      <path d="M15 8h13.3A15 15 0 0 1 15 30l6.5-11.5z" fill="#fcc31e" />
      <circle cx="15" cy="15" r="7" fill="#fff" /><circle cx="15" cy="15" r="5.6" fill="#2f7bea" />
    </svg>
  );
}

const Adobe = ({ t, c, bg, className }) => (
  <div className={`flex h-[27px] w-7 items-center justify-center rounded-[5px] text-[14.5px] font-bold tracking-[-0.3px] ${bg} ${c} ${className}`}>{t}</div>
);

function Taskbar() {
  return (
    <div className={`flex h-[60px] items-center bg-[linear-gradient(90deg,#1c2029_0%,#1b212e_15%,#16234a_19%,#12225a_24%,#132156_32%,#1a2145_40%,#142352_47%,#1a2142_55%,#12225a_61%,#191f3a_67%,#1d212b_74%,#1c2029_100%)] text-white ${SYS}`}>
      <div className="ml-[27px] h-[26px] w-[26px] rounded-full bg-[linear-gradient(135deg,#f8b62c_10%,#f6661b_90%)]" />
      <div className="ml-[11px] w-[466px] text-[14.3px] leading-[20px]">
        <div>38°C</div>
        <div className="text-[#c5c8cf]">Sunny</div>
      </div>
      <svg width="29" height="29" viewBox="0 0 29 29">
        <defs><linearGradient id="win" x1="0" y1="0" x2="1" y2="1"><stop offset="0" stopColor="#7fdcff" /><stop offset="1" stopColor="#0c8ff5" /></linearGradient></defs>
        <path d="M0 1a1 1 0 0 1 1-1h13v14H0zM15 0h13a1 1 0 0 1 1 1v13H15zM0 15h14v14H1a1 1 0 0 1-1-1zM15 15h14v13a1 1 0 0 1-1 1H15z" fill="url(#win)" />
      </svg>
      <div className="ml-[18px] flex h-10 w-[274px] items-center overflow-hidden rounded-full bg-[#303a60] pl-[13px]">
        <Ic w={20} h={20}><circle cx="9" cy="8.5" r="7.2" fill="#4d5a7c" stroke="#e8e8ee" strokeWidth="1.8" /><path d="M14 14l4.5 4.5" stroke="#e8e8ee" strokeWidth="2" /></Ic>
        <span className="ml-[12px] pt-[2px] text-[16.3px] text-[#dfe2ea]">Search</span>
        <svg width="70" height="32" viewBox="0 0 70 32" className="ml-auto mr-[2px] mt-[6px]">
          <path d="M0 32l5-14 8 2 9-9 5-4 8-7 6 4 5 9 8-3 8 4 5 7 3 11z" fill="#5f7d27" />
          <path d="M0 32l5-14 7 2-6 12zM20 14l8-8 7-6-3 13-9 7z" fill="#a4b53a" />
          <path d="M35 0l6 4 5 9-7 3z" fill="#4a661d" />
          <path d="M46 14l8-4 8 4 4 7-9 1z" fill="#d08f3c" />
          <path d="M2 32q6-8 15-6t14-2q12-4 20 1t18 3l-3 4z" fill="#a9a46a" />
          <path d="M7 26q7-4 13 0t12-1M40 22q8-4 15-1t12 3M8 31q12-6 24-1M42 30q10-4 24 0" stroke="#e6dfc0" strokeWidth="1.8" fill="none" />
          <path d="M9 28.5q7-4 13 0t11-1M42 26q8-4 15-1t10 2" stroke="#5c6a25" strokeWidth="1.5" fill="none" />
          <path d="M31 26l3-9 3 3 3-6 3 7 4-3 3 9-8-2z" fill="#e0ded6" /><path d="M34 18l2 7-4 1zM41 14l3 10-4 0z" fill="#85837c" />
        </svg>
      </div>
      <svg width="30" height="28" viewBox="0 0 30 28" className="ml-[15px]">
        <rect x="8" y="0" width="22" height="20" rx="1.5" fill="#ececec" /><rect x="0" y="8" width="22" height="20" rx="1.5" fill="#777" fillOpacity=".85" /><rect x="8" y="8" width="14" height="12" fill="#b2b2b2" />
      </svg>
      <svg width="26" height="28" viewBox="0 0 26 28" className="ml-[26px]">
        <path d="M12 1.5L16 0l10 14.500L15 28l-5-1L0 14z" fill="#fafafa" stroke="#222" strokeWidth="1" />
        <path d="M23 1L4 15l7 1-6 10 18-14-7-1.5z" fill="#f6a02c" stroke="#3a2206" strokeWidth="1" />
      </svg>
      <Adobe t="LrC" bg="bg-[#001e36]" c="text-[#31a8ff]" className="-mt-[3px] ml-[29px]" />
      <Adobe t="Ps" bg="bg-[#001e36]" c="text-[#31a8ff]" className="-mt-[3px] ml-[27px]" />
      <Adobe t="Pr" bg="bg-[#00005b]" c="text-[#9999ff]" className="-mt-[3px] ml-[27px]" />
      <div className="ml-[25px] flex h-[60px] w-8 flex-col items-center">
        <svg width="32" height="28" viewBox="0 0 32 28" className="mt-[17px]">
          <path d="M0 3a2 2 0 0 1 2-2h9l3 4H0z" fill="#e0a10c" /><path d="M0 5h29a2 2 0 0 1 2 2v18a2 2 0 0 1-2 2H2a2 2 0 0 1-2-2z" fill="#ffcf48" />
          <path d="M6 27v-4a3 3 0 0 1 3-3h14a3 3 0 0 1 3 3v4z" fill="#1180d8" /><path d="M9 23.5h14" stroke="#075799" />
        </svg>
        <div className="mt-[6px] h-[4px] w-[8px] rounded-full bg-[#8b8fa0]" />
      </div>
      <div className="ml-[24px]"><Chrome /></div>
      <svg width="30" height="24" viewBox="0 0 30 24" className="ml-[25px] mt-px">
        <path d="M0 0h7l5 15 4-10h6l-8 19H9z" fill="#f02b22" /><path d="M11 0h19l-7 24h-5l-4-11 3-6 3 7 4-9H13z" fill="#ff4432" /><path d="M14 6l5 18h4L17 5z" fill="#c81512" />
      </svg>
      <div className="ml-[14px] flex h-[50px] w-[50px] flex-col items-center rounded-[5px] border border-[#343a56] bg-[#2a3048]">
        <div className="mt-[10px] flex h-[28px] w-[28px] items-center justify-center bg-[#f4f6f8]"><TableauMark size={28} c="#3f7fa6" /></div>
        <div className="mt-[7px] h-[4px] w-[20px] rounded-full bg-[#4cc2ff]" />
      </div>
      <div className="relative ml-[16px] flex h-[60px] w-[30px] flex-col items-center pt-[15px]">
        <Chrome />
        <svg width="21" height="21" viewBox="0 0 21 21" className="absolute -right-[6px] top-[8px]">
          <circle cx="10.5" cy="10.5" r="10.5" fill="#000" /><circle cx="10.5" cy="7" r="3.2" fill="#fff" /><path d="M4.5 16c0-6 12-6 12 0z" fill="#fff" />
        </svg>
        <div className="mt-[6px] h-[4px] w-[8px] rounded-full bg-[#8b8fa0]" />
      </div>
      <div className="ml-auto flex items-center pr-6">
        <Ic w={16} h={10}><path d="M1.5 8.5L8 2l6.5 6.5" stroke="#eee" strokeWidth="2" /></Ic>
        <Ic w={20} h={15} className="ml-[22px]">
          <rect x=".8" y=".8" width="18.4" height="13.4" rx="2" stroke="#fff" strokeWidth="1.5" /><path d="M3.5 4.5h13M5 7.5h11" stroke="#fff" strokeWidth="1.6" strokeDasharray="1.8 1.4" /><path d="M5.5 11h9" stroke="#fff" strokeWidth="1.5" />
        </Ic>
        <Ic w={20} h={16} className="ml-[20px]">
          <path d="M1 6a12.8 12.8 0 0 1 18 0M3.7 9a9 9 0 0 1 12.6 0M6.5 11.8a5 5 0 0 1 7 0" stroke="#fff" strokeWidth="1.6" /><circle cx="10" cy="13.8" r="1.7" fill="#fff" />
        </Ic>
        <Ic w={20} h={18} className="ml-[10px]">
          <path d="M1 6h3.5L9 2v14l-4.5-4H1z" stroke="#fff" strokeWidth="1.5" /><path d="M11.5 6.5a4 4 0 0 1 0 5" stroke="#fff" strokeWidth="1.4" /><path d="M14 4a7 7 0 0 1 0 10M16.5 1.5a11 11 0 0 1 0 15" stroke="#666b78" strokeWidth="1.3" />
        </Ic>
        <Ic w={20} h={13} className="ml-[10px]">
          <rect x=".8" y=".8" width="16.4" height="11.4" rx="2.5" stroke="#fff" strokeWidth="1.5" /><rect x="3" y="3" width="10" height="7" fill="#fff" /><path d="M18 4.5h1.5v4H18z" fill="#fff" />
        </Ic>
        <div className="-mt-[2px] ml-[19px] mr-px w-[78px] text-right text-[14.8px] leading-[20px]">
          <div>16:51</div>
          <div>18-04-2023</div>
        </div>
      </div>
    </div>
  );
}

export default function App() {
  return (
    <div className="relative flex h-[1080px] w-[1920px] flex-col overflow-hidden bg-[#f5f5f5]">
      <TitleBar />
      <MenuBar />
      <Toolbar />
      <div className="flex h-[852px]">
        <DataPane />
        <Cards />
        <div className="ml-[6px] mr-[6px] flex h-[846px] grow flex-col gap-[6px]">
          <Shelf label="Columns" pill="Year">
            <path d="M2 3.5V13M6.5 3.5V13M11 3.5V13M2 .5v1.8M6.5 .5v1.8M11 .5v1.8" stroke="#555" strokeWidth="2" />
          </Shelf>
          <Shelf label="Rows" pill="SUM(population)">
            <path d="M3.5 2.5H13M3.5 6.5H13M3.5 10.5H13M0 2.5h2M0 6.5h2M0 10.5h2" stroke="#555" strokeWidth="1.9" />
          </Shelf>
          <Chart />
        </div>
      </div>
      <SheetTabs />
      <StatusBar />
      <Taskbar />
      <ShowMe />
    </div>
  );
}
